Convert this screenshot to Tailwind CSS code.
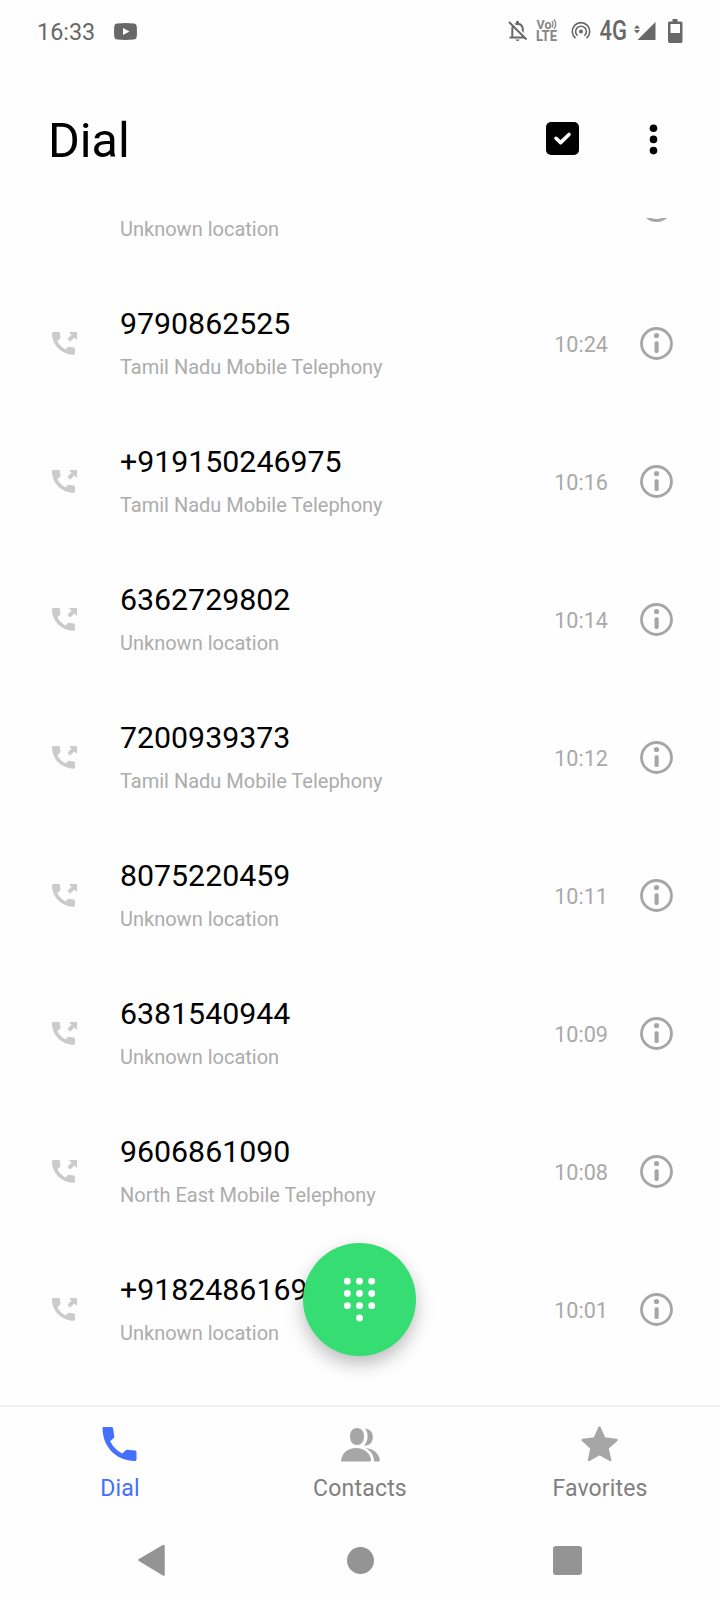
<!DOCTYPE html>
<html lang="en">
<head>
  <title>Dial</title>
  <meta charset="UTF-8">
  <meta name="viewport" content="width=device-width, initial-scale=1.0">
  <script src="https://cdn.jsdelivr.net/npm/@tailwindcss/browser@4"></script>
</head>
<body class="bg-[#fefefe]">
  <!-- Shared icons -->
  <svg class="hidden">
    <symbol id="outgoing" viewBox="0 -1 26 25">
      <path d="M1.4 0H6.8Q7.8 0 7.9 1C8 2.5 8.3 4.2 8.5 5.3Q8.6 6.2 8 6.8L5.4 9.3C7.3 13 10 15.6 13.6 17.4L15.9 15.1Q16.5 14.6 17.3 14.8C19 15.3 20.5 15.5 21.8 15.5Q23 15.6 23 16.7V21.6Q23 22.7 21.9 22.7C9.5 22.5 0 13 0 1.4Q0 0 1.4 0Z" fill="#cbcbcb"/>
      <path d="M17 0H25V8L22.4 5.6L18.3 9.6L15.4 6.7L19.5 2.7Z" fill="#cbcbcb"/>
    </symbol>
    <symbol id="info" viewBox="0.5 0.5 33 33">
      <circle cx="17" cy="17" r="15" fill="none" stroke="#a6a6a6" stroke-width="2.8"/>
      <circle cx="17" cy="9" r="2.6" fill="#a6a6a6"/>
      <rect x="15" y="14.8" width="4.2" height="11.6" rx="1.7" fill="#a6a6a6"/>
    </symbol>
  </svg>

  <div class="w-[720px] h-[1600px] flex flex-col overflow-hidden font-[Roboto,sans-serif]">
    <!-- Status bar -->
    <div class="h-[62px] shrink-0 flex items-center pl-[37px] pr-[37px] text-[#686868]">
      <span class="w-[77px] text-[23.4px] leading-none pt-1">16:33</span>
      <svg class="w-[23px] h-[17px]" viewBox="0 0 23 17">
        <path d="M3 .5Q11.500-.5 20 .5Q22.500.8 22.700 3Q23.200 8.500 22.700 14Q22.500 16.200 20 16.500Q11.500 17.300 3 16.500Q.5 16.200.3 14Q-.2 8.500.3 3Q.5.8 3 .5Z" fill="currentColor"/>
        <path d="M9 5V12L15.500 8.500Z" fill="#fefefe"/>
      </svg>
      <svg class="ml-auto w-[20px] h-[22px]" viewBox="0 0 20 22">
        <path d="M4.300 17V9.500C4.300 6 6.200 4 9.500 3.700C13 4 14.800 6 14.800 9.500V17M1.500 17.600H17" fill="none" stroke="currentColor" stroke-width="2"/>
        <path d="M8 1.700Q9.500-.4 11 1.700V4H8ZM7.200 19.500H11.800Q9.500 22.500 7.200 19.500Z" fill="currentColor"/>
        <path d="M2.500 1L20 18.500" stroke="#fefefe" stroke-width="2"/>
        <path d="M1 2L18.500 19.500" stroke="currentColor" stroke-width="2"/>
      </svg>
      <svg class="ml-[8px] w-[22px] h-[28px]" viewBox="0 0 22 28">
        <g font-family="Roboto" font-weight="700" fill="#858585">
          <text x="0.500" y="11.800" font-size="12.500" textLength="15" lengthAdjust="spacingAndGlyphs">Vo</text>
          <text x="0" y="23.800" font-size="14.500" textLength="21" lengthAdjust="spacingAndGlyphs">LTE</text>
        </g>
        <path d="M16 4Q18 7 16 10.500M18 2.500Q21.500 7 18 12" fill="none" stroke="#858585" stroke-width="1.300"/>
      </svg>
      <svg class="ml-[13px] w-[20px] h-[20px]" viewBox="0 0 20 20">
        <circle cx="10" cy="10.500" r="2" fill="currentColor"/>
        <path d="M6.500 14.700A5.400 5.400 0 1 1 13.500 14.700M4.500 17.100A8.700 8.700 0 1 1 15.500 17.100" fill="none" stroke="currentColor" stroke-width="1.600"/>
      </svg>
      <svg class="ml-[8px] w-[30px] h-[40px]" viewBox="0 0 30 40">
        <text x="0.5" y="29.3" font-family="Roboto" font-weight="500" font-size="27" fill="currentColor" textLength="27.5" lengthAdjust="spacingAndGlyphs">4G</text>
      </svg>
      <svg class="ml-[5px] w-[22px] h-[18px]" viewBox="0 0 22 18">
        <path d="M21.500 0V18H3.500Z" fill="currentColor"/>
        <path d="M0 6.500L3 3L6 6.500ZM0 8L3 11.500L6 8Z" fill="currentColor"/>
      </svg>
      <svg class="ml-[11px] w-[16px] h-[24px]" viewBox="0 0 16 24">
        <path d="M5.500 0H10.500V2.500H14Q15.500 2.500 15.500 4V22Q15.500 24 14 24H2.500Q1 24 1 22V4Q1 2.500 2.500 2.500H5.500Z" fill="currentColor"/>
        <rect x="3.500" y="5" width="9.500" height="9" fill="#fefefe"/>
      </svg>
    </div>

    <!-- Title bar -->
    <header class="h-[156px] shrink-0 flex items-start pt-[54px] pl-[48px] pr-[61px] text-black">
      <h1 class="pt-px text-[48.5px] leading-[48px]">Dial</h1>
      <svg class="ml-auto mt-[6px] w-[33px] h-[33px]" viewBox="0 0 33 33">
        <rect width="33" height="33" rx="5"/>
        <path d="M10 16.300L14.600 20.600L23 12.500" fill="none" stroke="#fff" stroke-width="3.600" stroke-linecap="round" stroke-linejoin="round"/>
      </svg>
      <svg class="ml-[70px] mt-[7px] w-[10px] h-[32px]" viewBox="0 0 10 32">
        <circle cx="4.500" cy="5.300" r="3.800"/>
        <circle cx="4.500" cy="16.400" r="3.800"/>
        <circle cx="4.500" cy="27.600" r="3.800"/>
      </svg>
    </header>

    <!-- Call log -->
    <main class="relative flex-1 overflow-hidden">
      <div id="calls" class="-mt-[81.5px]"></div>
      <button class="absolute left-[303px] top-[1025px] w-[113px] h-[113px] rounded-full bg-[#35dd73] shadow-[0_8px_18px_rgba(0,0,0,0.26)]">
        <svg class="w-[113px] h-[113px]" viewBox="0 0 113 113" fill="#fff">
          <circle cx="44.300" cy="38.200" r="3.400"/><circle cx="56.500" cy="38.200" r="3.400"/><circle cx="68.700" cy="38.200" r="3.400"/>
          <circle cx="44.300" cy="50.500" r="3.400"/><circle cx="56.500" cy="50.500" r="3.400"/><circle cx="68.700" cy="50.500" r="3.400"/>
          <circle cx="44.300" cy="62.700" r="3.400"/><circle cx="56.500" cy="62.700" r="3.400"/><circle cx="68.700" cy="62.700" r="3.400"/>
          <circle cx="56.500" cy="75" r="3.400"/>
        </svg>
      </button>
    </main>

    <!-- Tabs -->
    <nav class="h-[115px] shrink-0 grid grid-cols-3 border-t-2 border-[#f0f0f0] text-[23px] leading-[28px] text-[#808080]">
      <a class="flex flex-col items-center pt-[19px] text-[#456fff]">
        <svg class="w-[36px] h-[36px]" viewBox="0 0 36 36">
          <path d="M1.500 1H9.500Q10.800 1 11 2.300L12.300 10Q12.500 11.300 11.500 12.200L8.200 15.300C11 21 15 25 20.200 27.600L23.500 24.400Q24.400 23.500 25.700 23.700L33.100 24.600Q34.500 24.800 34.500 26.200V33.500Q34.500 35 33 35C14.500 35 .5 21 .5 2Q.5 1 1.500 1Z" fill="currentColor"/>
        </svg>
        <span class="mt-[13px] tracking-[0.2px]">Dial</span>
      </a>
      <a class="flex flex-col items-center pt-[19px]">
        <svg class="w-[40px] h-[36px]" viewBox="-0.5 0 40 36" fill="#a6a6a6">
          <path d="M16.500 2C21 2 23.500 5.500 23.500 10.500C23.500 15.500 20.500 19 16.500 19C12.500 19 9.500 15.500 9.500 10.500C9.500 5.500 12 2 16.500 2Z"/>
          <path d="M.5 35.500C1 27 7.500 22 15.500 22C23.500 22 30 27 30.500 34Q30.500 35.500 29.500 35.500Z"/>
          <path d="M24.500 2.500C29.500 3 32.500 6.500 32.300 11.500C32.200 16.500 29 19.800 23.500 19.700C28 15 28.300 7 24.500 2.500Z"/>
          <path d="M25 22.300C33 22.500 38.500 27.500 39.300 34Q39.400 35.500 38 35.500H33.500C33.700 29.500 30.500 25 25 22.300Z"/>
        </svg>
        <span class="mt-[13px] tracking-[0.2px]">Contacts</span>
      </a>
      <a class="flex flex-col items-center pt-[19px]">
        <svg class="w-[38px] h-[36px]" viewBox="0 0 38 36">
          <path d="M18.500 1.500L23.300 12.500L35.500 14L26.500 22L29.200 34L18.500 28L8 34L10.500 22L1.700 14L13.700 12.500Z" fill="#a6a6a6" stroke="#a6a6a6" stroke-width="2.400" stroke-linejoin="round"/>
        </svg>
        <span class="mt-[13px] tracking-[0.15px]">Favorites</span>
      </a>
    </nav>

    <!-- System navigation -->
    <div class="h-[80px] shrink-0 flex items-center pl-[137px]">
      <svg class="w-[29px] h-[32px]" viewBox="0 0 29 32">
        <path d="M2.500 16L26.500 2V30.500Z" fill="#949494" stroke="#949494" stroke-width="2.500" stroke-linejoin="round"/>
      </svg>
      <div class="ml-[181px] w-[27px] h-[27px] rounded-full bg-[#949494]"></div>
      <div class="ml-[179px] w-[29px] h-[29px] rounded-[3px] bg-[#949494]"></div>
    </div>
  </div>

  <script>
    const calls = [
      ["", "Unknown location", ""],
      ["9790862525", "Tamil Nadu Mobile Telephony", "10:24"],
      ["+919150246975", "Tamil Nadu Mobile Telephony", "10:16"],
      ["6362729802", "Unknown location", "10:14"],
      ["7200939373", "Tamil Nadu Mobile Telephony", "10:12"],
      ["8075220459", "Unknown location", "10:11"],
      ["6381540944", "Unknown location", "10:09"],
      ["9606861090", "North East Mobile Telephony", "10:08"],
      ["+9182486169", "Unknown location", "10:01"]
    ];
    document.getElementById("calls").innerHTML = calls.map(([number, place, time]) => `
      <div class="h-[138px] flex items-center pl-[52px] pr-[47px]">
        <svg class="w-[26px] h-[25px]"><use href="#outgoing"></use></svg>
        <div class="ml-[42px] flex-1 pb-[2px]">
          <div class="h-[36px] text-[30.3px] leading-[36px] text-black">${number}</div>
          <div class="mt-[13px] text-[20px] leading-[24px] text-[#acacac]">${place}</div>
        </div>
        <span class="text-[21.6px] leading-[26px] pt-[2px] text-[#a9a9a9]">${time}</span>
        <svg class="ml-[32px] w-[33px] h-[33px]"><use href="#info"></use></svg>
      </div>`).join("");
  </script>
</body>
</html>
